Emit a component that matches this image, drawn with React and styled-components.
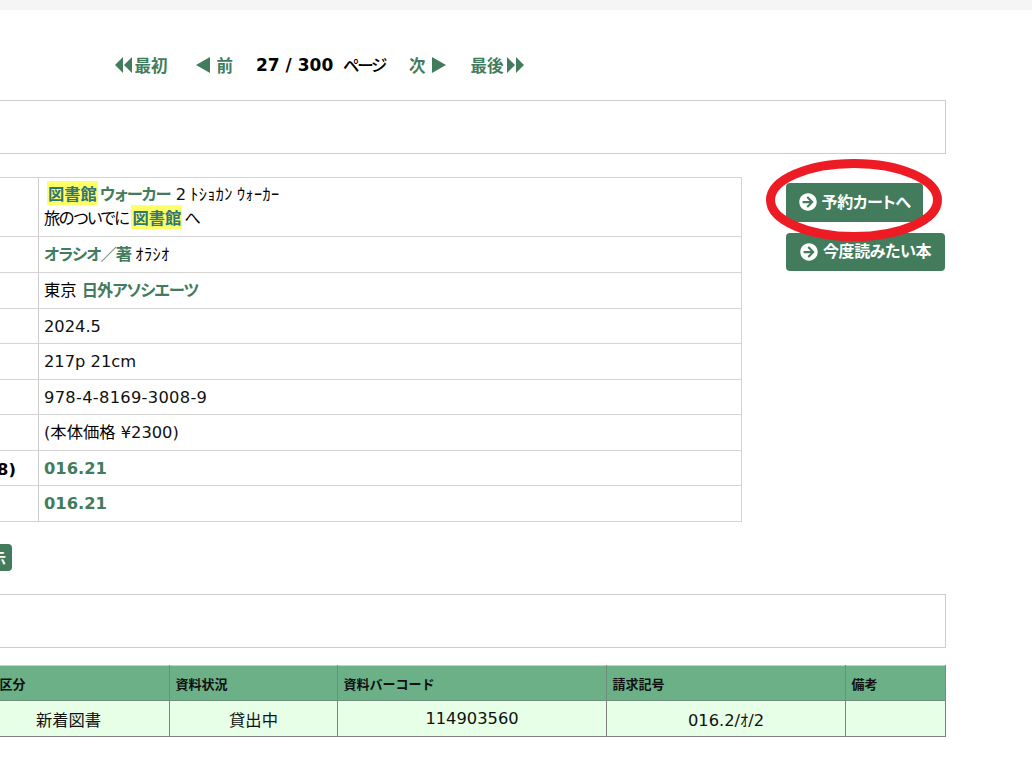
import React from 'react'
import styled, { createGlobalStyle } from 'styled-components'
import { FaArrowCircleRight } from 'react-icons/fa'

const GREEN = '#437c5c'

const Global = createGlobalStyle`
  html, body {
    margin: 0;
    padding: 0;
    background: #fff;
    overflow: hidden;
    height: 774px;
  }
  body {
    font-family: "DejaVu Sans", "Noto Sans CJK JP", sans-serif;
    font-size: 16.3px;
    color: #111;
  }
`

const TopBar = styled.div`
  height: 10px;
  background: #f5f5f5;
`
const Page = styled.div`
  width: 1254px;
  margin-left: -308px;
`
const Pager = styled.nav`
  height: 90px;
  display: flex;
  align-items: center;
  justify-content: center;
  padding: 20px 0 0 1px;
  box-sizing: border-box;
  font-family: "Noto Sans CJK JP", sans-serif;
  font-feature-settings: "palt";
  font-weight: 700;
  font-size: 16.5px;
`
const PageLink = styled.a`
  display: flex;
  align-items: center;
  gap: ${p => p.$gap || 4}px;
  color: ${GREEN};
  margin-right: ${p => p.$after || 0}px;
`
const Count = styled.span`
  color: #000;
  font-family: "DejaVu Sans", sans-serif;
  font-size: 17px;
  white-space: pre;
  margin-right: 9.5px;
`
const PageWord = styled.span`
  color: #000;
  font-weight: 500;
  letter-spacing: -2.2px;
  margin-right: 24px;
`
const Box = styled.div`
  height: 52px;
  border: 1px solid #ccc;
`
const Main = styled.div`
  display: flex;
  margin-top: 23px;
  position: relative;
`
const Detail = styled.table`
  width: 1050px;
  border-collapse: collapse;
  border: 1px solid #ccc;
  table-layout: fixed;
  td {
    border: 1px solid #d4d4d4;
    padding: 0 0 0 5px;
    box-sizing: border-box;
  }
`
const Row = styled.tr`
  td {
    height: ${p => p.$h}px;
    padding-bottom: ${p => p.$lift || 0}px;
  }
`
const Label = styled.td`
  width: 346px;
  font-weight: 700;
  color: #000;
  && {
    padding-left: 225px;
    border-right-color: #ccc;
  }
`
const Strong = styled.a`
  color: ${GREEN};
  font-weight: 700;
  font-family: "Noto Sans CJK JP", sans-serif;
  font-feature-settings: "palt";
  letter-spacing: -1px;
`
const Code = styled.a`
  color: ${GREEN};
  font-weight: 700;
`
const Mark = styled.mark`
  background: #ffff66;
  color: #2f7579;
  font-weight: 700;
  padding: 0 1px;
  margin: 0 2px 0 3px;
  font-family: "Noto Sans CJK JP", sans-serif;
`
const Title = styled.div`
  line-height: 23px;
`
const Kana = styled.span`
  color: #000;
  font-family: "Noto Sans CJK JP", sans-serif;
  font-feature-settings: "palt";
`
const Subtitle = styled(Kana)`
  letter-spacing: -1.4px;
`
const HalfKana = styled(Kana)`
  letter-spacing: 0.4px;
  margin-left: -1px;
`
const Isbn = styled.span`
  letter-spacing: 0.3px;
`
const Side = styled.div`
  margin: 6px 0 0 44px;
  display: flex;
  flex-direction: column;
  align-items: flex-start;
  gap: 11px;
`
const Action = styled.button`
  display: flex;
  align-items: center;
  justify-content: center;
  gap: 5px;
  height: ${p => p.$h}px;
  width: ${p => p.$w}px;
  padding: 0 0 4px;
  border: 0;
  border-radius: 4px;
  background: ${GREEN};
  color: #fff;
  font-family: "Noto Sans CJK JP", sans-serif;
  font-feature-settings: "palt";
  font-weight: 700;
  font-size: 16px;
  letter-spacing: -0.4px;
  svg {
    font-size: 18px;
    flex: none;
    margin-top: 3px;
  }
`
const Ring = styled.svg`
  position: absolute;
  left: 1074px;
  top: -18px;
  width: 176px;
  height: 82px;
`
const ShowRow = styled.div`
  margin: 22px 0 23px;
  display: flex;
  justify-content: flex-start;
  padding-left: 200px;
`
const ShowButton = styled.button`
  width: 120px;
  height: 27px;
  border: 0;
  border-radius: 4px;
  background: ${GREEN};
  color: #fff;
  font-family: "Noto Sans CJK JP", sans-serif;
  font-weight: 700;
  font-size: 15px;
  text-align: right;
  padding: 0 6px 0 0;
`
const Holdings = styled.table`
  margin: 17px 0 0 275px;
  width: 978px;
  border-collapse: collapse;
  table-layout: fixed;
  border: 1px solid #808080;
`
const Head = styled.th`
  width: ${p => p.$w}px;
  height: 35px;
  background: #6bb086;
  border: 1px solid #6f8f7c;
  border-top-color: #c4d4ca;
  text-align: left;
  padding: 0 0 0 5.5px;
  font-family: "Noto Sans CJK JP", sans-serif;
  font-size: 13px;
  font-weight: 700;
  color: #111;
  box-sizing: border-box;
`
const Cell = styled.td`
  height: 36px;
  background: #e6ffe6;
  border: 1px solid #808080;
  text-align: center;
  padding: 0;
  box-sizing: border-box;
`

const Arrows = ({ dir, count }) => {
  const w = count === 2 ? 17 : 14
  return (
    <svg width={w} height="16" viewBox={`0 0 ${w} 16`} fill={GREEN}>
      {dir === 'left' && count === 2 && <path d="M0 8 8 0V16ZM9 8 17 0V16Z" />}
      {dir === 'left' && count === 1 && <path d="M0 8 14 0V16Z" />}
      {dir === 'right' && count === 2 && <path d="M0 0 8 8 0 16ZM9 0 17 8 9 16Z" />}
      {dir === 'right' && count === 1 && <path d="M0 0 14 8 0 16Z" />}
    </svg>
  )
}

const columns = [
  { name: '資料区分', w: 202, value: '新着図書' },
  { name: '資料状況', w: 168, value: '貸出中' },
  { name: '資料バーコード', w: 269, value: '114903560' },
  { name: '請求記号', w: 239, value: '016.2/ｵ/2' },
  { name: '備考', w: 100, value: '' },
]

const App = () => (
  <>
    <Global />
    <TopBar />
    <Page>
      <Pager>
        <PageLink $gap={3} $after={28}><Arrows dir="left" count={2} />最初</PageLink>
        <PageLink $gap={7} $after={23}><Arrows dir="left" count={1} />前</PageLink>
        <Count>27 / 300</Count>
        <PageWord>ページ</PageWord>
        <PageLink $gap={7} $after={24}>次<Arrows dir="right" count={1} /></PageLink>
        <PageLink>最後<Arrows dir="right" count={2} /></PageLink>
      </Pager>
      <Box />
      <Main>
        <Detail>
          <tbody>
            <Row $h={59} $lift={2}>
              <Label>タイトル</Label>
              <td>
                <Title>
                  <Mark>図書館</Mark><Strong>ウォーカー</Strong> 2 <HalfKana>ﾄｼｮｶﾝ ｳｫｰｶｰ</HalfKana>
                </Title>
                <Title><Subtitle>旅のついでに</Subtitle><Mark>図書館</Mark><Kana>へ</Kana></Title>
              </td>
            </Row>
            <Row $h={36} $lift={4}><Label>著者</Label><td><Strong>オラシオ／著</Strong> <HalfKana>ｵﾗｼｵ</HalfKana></td></Row>
            <Row $h={36} $lift={4}><Label>出版者</Label><td><Kana>東京</Kana> <Strong>日外アソシエーツ</Strong></td></Row>
            <Row $h={35}><Label>出版年</Label><td>2024.5</td></Row>
            <Row $h={36}><Label>ページ数</Label><td>217p 21cm</td></Row>
            <Row $h={35}><Label>ISBN</Label><td><Isbn>978-4-8169-3008-9</Isbn></td></Row>
            <Row $h={36} $lift={4}><Label>価格</Label><td>(<Kana>本体価格</Kana> ¥2300)</td></Row>
            <Row $h={35}><Label>分類(NDC8)</Label><td><Code>016.21</Code></td></Row>
            <Row $h={36}><Label>分類</Label><td><Code>016.21</Code></td></Row>
          </tbody>
        </Detail>
        <Side>
          <Action $w={137} $h={39}><FaArrowCircleRight />予約カートへ</Action>
          <Action $w={159} $h={38}><FaArrowCircleRight />今度読みたい本</Action>
        </Side>
        <Ring viewBox="0 0 176 82">
          <ellipse cx="88" cy="41" rx="83.5" ry="36.5" fill="none" stroke="#ed1c24" strokeWidth="9" />
        </Ring>
      </Main>
      <ShowRow>
        <ShowButton>全件表示</ShowButton>
      </ShowRow>
      <Box />
      <Holdings>
        <thead>
          <tr>{columns.map(c => <Head key={c.name} $w={c.w}>{c.name}</Head>)}</tr>
        </thead>
        <tbody>
          <tr>{columns.map(c => <Cell key={c.name}>{c.value}</Cell>)}</tr>
        </tbody>
      </Holdings>
    </Page>
  </>
)

export default App
